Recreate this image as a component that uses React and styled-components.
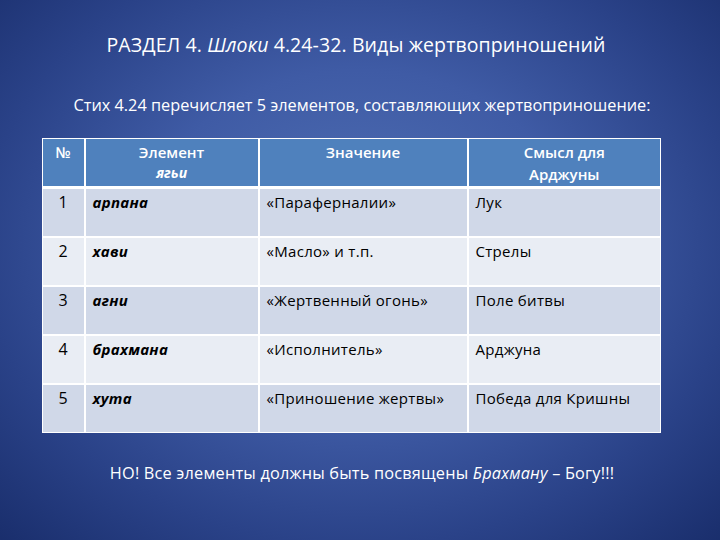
import styled, { createGlobalStyle } from "styled-components";

const GlobalStyle = createGlobalStyle`
  html, body {
    margin: 0;
    padding: 0;
  }
  body {
    font-family: "Open Sans", "Liberation Sans", sans-serif;
  }
`;

const Slide = styled.div`
  width: 720px;
  height: 540px;
  box-sizing: border-box;
  padding-top: 31px;
  display: flex;
  flex-direction: column;
  color: #fff;
  background: radial-gradient(ellipse 75% 80% at 50% 45%, #5070b4 0%, #3f5ba5 40%, #2a4288 70%, #172b68 100%);
  overflow: hidden;
`;

const Title = styled.h1`
  margin: 0;
  font-size: 19.5px;
  font-weight: 400;
  line-height: 28px;
  text-align: center;
  padding-right: 8px;
  letter-spacing: 0.1px;
`;

const Lead = styled.p`
  margin: 36px 0 0;
  font-size: 16.3px;
  line-height: 20px;
  text-align: center;
  padding-left: 4px;
`;

const TableWrap = styled.div`
  margin-top: 23px;
  padding-left: 42px;
`;

const Table = styled.table`
  width: 618px;
  border-collapse: collapse;
  table-layout: fixed;
  border: 1px solid #fff;
`;

const HeadCell = styled.th`
  height: 49px;
  box-sizing: border-box;
  padding: 2px 6px 0;
  vertical-align: top;
  text-align: center;
  background: #4f81bd;
  color: #fff;
  font-size: 15px;
  font-weight: 600;
  line-height: 22px;
  border-left: 2px solid #fff;
  border-bottom: 3px solid #fff;
  &:first-child { border-left: none; }
`;

const Sub = styled.span`
  display: block;
  font-size: 14px;
  font-style: italic;
  font-weight: 700;
  line-height: 20px;
`;

const Row = styled.tr`
  background: ${p => (p.$odd ? "#d0d8e8" : "#e9edf4")};
`;

const Cell = styled.td`
  height: 49px;
  box-sizing: border-box;
  padding: 3px 7px 0;
  vertical-align: top;
  color: #000;
  font-size: ${p => (p.$center ? "16px" : "15px")};
  line-height: 20px;
  letter-spacing: 0.3px;
  text-align: ${p => (p.$center ? "center" : "left")};
  font-style: ${p => (p.$term ? "italic" : "normal")};
  font-weight: ${p => (p.$term ? 700 : 400)};
  border-left: 2px solid #fff;
  border-top: 2px solid #fff;
  &:first-child { border-left: none; }
`;

const Note = styled.p`
  margin: 30px 0 0;
  font-size: 16.3px;
  line-height: 20px;
  letter-spacing: 0.2px;
  text-align: center;
  padding-left: 4px;
`;

const rows = [
  ["1", "арпана", "«Параферналии»", "Лук"],
  ["2", "хави", "«Масло» и т.п.", "Стрелы"],
  ["3", "агни", "«Жертвенный огонь»", "Поле битвы"],
  ["4", "брахмана", "«Исполнитель»", "Арджуна"],
  ["5", "хута", "«Приношение жертвы»", "Победа для Кришны"],
];

export default function App() {
  return (
    <>
      <GlobalStyle />
      <Slide>
        <Title>
          РАЗДЕЛ 4. <i>Шлоки</i> 4.24-32. Виды жертвоприношений
        </Title>
        <Lead>Стих 4.24 перечисляет 5 элементов, составляющих жертвоприношение:</Lead>
        <TableWrap>
          <Table>
            <colgroup>
              <col style={{ width: 42 }} />
              <col style={{ width: 174 }} />
              <col style={{ width: 209 }} />
              <col style={{ width: 193 }} />
            </colgroup>
            <thead>
              <tr>
                <HeadCell>№</HeadCell>
                <HeadCell>
                  Элемент
                  <Sub>ягьи</Sub>
                </HeadCell>
                <HeadCell>Значение</HeadCell>
                <HeadCell>
                  Смысл для
                  <br />
                  Арджуны
                </HeadCell>
              </tr>
            </thead>
            <tbody>
              {rows.map((r, i) => (
                <Row key={r[0]} $odd={i % 2 === 0}>
                  <Cell $center>{r[0]}</Cell>
                  <Cell $term>{r[1]}</Cell>
                  <Cell>{r[2]}</Cell>
                  <Cell>{r[3]}</Cell>
                </Row>
              ))}
            </tbody>
          </Table>
        </TableWrap>
        <Note>
          НО! Все элементы должны быть посвящены <i>Брахману</i> – Богу!!!
        </Note>
      </Slide>
    </>
  );
}
